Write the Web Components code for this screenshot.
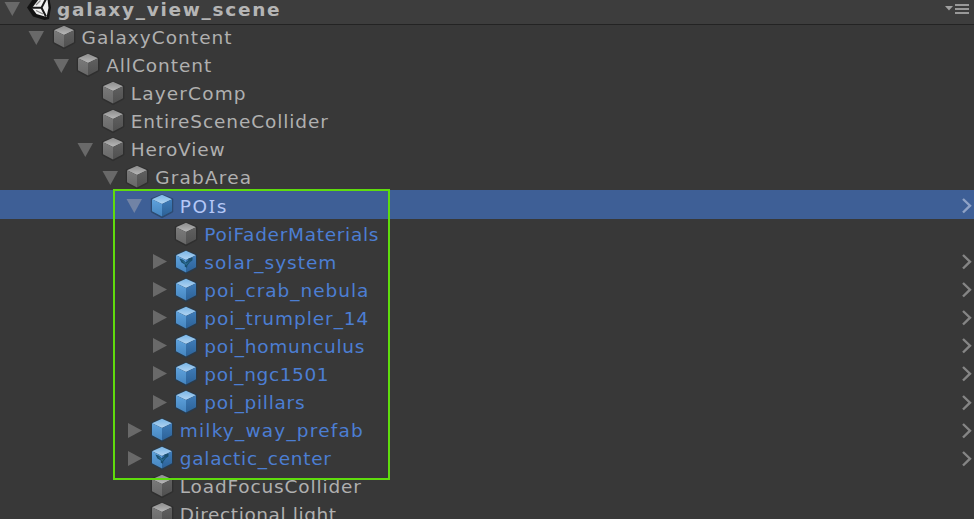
<!DOCTYPE html>
<html lang="en"><head><meta charset="utf-8"><title>Hierarchy</title>
<style>html,body{margin:0;height:100%;overflow:hidden;background:#383838}</style></head>
<body><hierarchy-panel></hierarchy-panel>
<script>
class TreeLabel extends HTMLElement {
  connectedCallback() {
    const root = this.attachShadow({mode: 'open'});
    root.innerHTML = `<style>
      :host{display:block;white-space:pre;line-height:28px}
      span{display:inline-block}
      i{font:18.5px "Noto Sans",sans-serif;line-height:0}
      </style><span></span>`;
    const span = root.querySelector('span');
    const text = this.getAttribute('text');
    span.innerHTML = text.replace('I', '<i>I</i>');
    const target = Number(this.getAttribute('fit'));
    const natural = span.getBoundingClientRect().width;
    span.style.letterSpacing = ((target + 1.6 - natural) / (text.length - .4)) + 'px';
  }
}
customElements.define('tree-label', TreeLabel);

class TreeArrow extends HTMLElement {
  connectedCallback() {
    const d = this.getAttribute('state') === 'open' ? 'M1.5 3H17L9.3 17Z' : 'M3 2V17L17 9.5Z';
    this.attachShadow({mode: 'open'}).innerHTML = `<style>:host{display:block;width:20px;height:20px}svg{display:block}</style>
      <svg width="20" height="20"><path d="${this.getAttribute('state') ? d : ''}" fill="var(--arrow,#696969)"/></svg>`;
  }
}
customElements.define('tree-arrow', TreeArrow);

class CubeIcon extends HTMLElement {
  connectedCallback() {
    const kind = this.getAttribute('kind');
    const blue = kind !== 'gray';
    const c = blue ? ['#79b5e6', '#b3d5f2', '#5fa2dc', '#4585c0', '#3f7cb8', '#2c6298', '#213c56']
                   : ['#8c8c8c', '#b9b9b9', '#7a7a7a', '#686868', '#606060', '#505050', '#292929'];
    const mark = kind === 'variant' ? `<path d="M5.4 9.4L9 10.8 11.8 13.4 14.2 11.4 14.4 9.6 18.6 8.6 18.4 11.6 15.8 13.2 13.4 16.4 13 18.8 10.8 17.8 10.8 15.6 7.4 13.4Z" fill="#1b4f6e"/><path d="M7 10.8L10 12.4 12.2 14.6 14.8 12.4 17 10.6 12.3 16.2Z" fill="#3486b5" opacity=".55"/>` : '';
    this.attachShadow({mode: 'open'}).innerHTML = `<style>:host{display:block;width:24px;height:26px}svg{display:block}</style>
      <svg width="24" height="26" viewBox="0 0 24 26"><defs>
      <linearGradient id="t" x2="0" y2="1"><stop stop-color="${c[0]}"/><stop offset="1" stop-color="${c[1]}"/></linearGradient>
      <linearGradient id="l" x2="0" y2="1"><stop stop-color="${c[2]}"/><stop offset="1" stop-color="${c[3]}"/></linearGradient>
      <linearGradient id="r" x2="0" y2="1"><stop stop-color="${c[4]}"/><stop offset="1" stop-color="${c[5]}"/></linearGradient></defs>
      <path d="M12 1.5L22.8 5.8V19L12 24.8 1.2 19V5.8Z" fill="${c[6]}" stroke="${c[6]}" stroke-width=".8" stroke-linejoin="round" opacity=".6"/>
      <path d="M12 1.8L22 6.2 12 11 2 6.2Z" fill="url(#t)"/>
      <path d="M2 6.2L12 11V23.4L2 18.2Z" fill="url(#l)"/>
      <path d="M22 6.2L12 11V23.4L22 18.2Z" fill="url(#r)"/>${mark}</svg>`;
  }
}
customElements.define('cube-icon', CubeIcon);

class TreeRow extends HTMLElement {
  connectedCallback() {
    const a = n => this.getAttribute(n) || '';
    this.attachShadow({mode: 'open'}).innerHTML = `<style>
      :host{display:flex;align-items:center;box-sizing:border-box;height:28.08px;flex:none;
        padding:3px 0 0 calc(27px + var(--depth) * 24.55px);
        font:18.5px "DejaVu Sans",sans-serif;color:#b0b0b0}
      :host([blue]){color:#4c7ed3}
      :host([selected]){background:#3e5f96;color:#b4c7f7;--arrow:#7183a5;--chev:#8fa2c6}
      cube-icon{margin:-1px 6px 0 4.6px}
      tree-label{flex:1;margin:-1px 0 -2px}
      .chev{margin-right:1px}
      </style>
      <tree-arrow state="${a('state')}"></tree-arrow><cube-icon kind="${a('kind')}"></cube-icon>
      <tree-label text="${a('text')}" fit="${a('fit')}"></tree-label>
      ${this.hasAttribute('chevron') ? '<svg class="chev" width="12" height="18"><path d="M2 2L9 8.7 2 15.5" fill="none" stroke="var(--chev,#858585)" stroke-width="2.4"/></svg>' : ''}`;
  }
}
customElements.define('tree-row', TreeRow);

class SceneHeader extends HTMLElement {
  connectedCallback() {
    this.attachShadow({mode: 'open'}).innerHTML = `<style>
      :host{display:flex;align-items:flex-start;box-sizing:border-box;height:25px;flex:none;background:#3d3d3d;border-bottom:1px solid #232323;
       font:bold 18.5px "DejaVu Sans",sans-serif;color:#b5b5b5;padding-left:2.5px;overflow:hidden}
      tree-arrow{margin-top:-1px}.logo{margin-left:4.5px}tree-label{margin:-4px 0 0 6px;flex:1}.menu{margin:2px 3px 0 0}
      </style><tree-arrow state="open"></tree-arrow>
      <svg class="logo" width="24" height="21" viewBox="0 0 24 21"><path d="M0 7.5L6 -1H22.5L24 7.5 22 19 17.5 20 6 16.5Z" fill="#131313"/>
       <path d="M5 8L12-1H20.5L21.5 8 19.5 17 9.5 14Z" fill="#f1f1f1"/>
       <path d="M4 7.7H14.5L19.5-2M14.5 7.7L19 16.5" fill="none" stroke="#191919" stroke-width="2"/>
       <path d="M9 5L13.5 0.5M9 10.5L16 14" fill="none" stroke="#8a8a8a" stroke-width="1.2"/></svg>
      <tree-label text="galaxy_view_scene" fit="222"></tree-label>
      <svg class="menu" width="26" height="14"><path d="M0 4H8L4 8.5Z" fill="#a0a0a0"/><path d="M10 3H24M10 7H24M10 11H24" stroke="#999" stroke-width="2"/></svg>`;
  }
}
customElements.define('scene-header', SceneHeader);

class HierarchyPanel extends HTMLElement {
  connectedCallback() {
    const rows = [
      [0,'open','gray','GalaxyContent',149], [1,'open','gray','AllContent',104], [2,'','gray','LayerComp',114],
      [2,'','gray','EntireSceneCollider',196], [2,'open','gray','HeroView',93], [3,'open','gray','GrabArea',95],
      [4,'open','blue','POIs',46,'blue selected chevron'], [5,'','gray','PoiFaderMaterials',173,'blue'],
      [5,'closed','variant','solar_system',131,'blue chevron'], [5,'closed','blue','poi_crab_nebula',163,'blue chevron'],
      [5,'closed','blue','poi_trumpler_14',163,'blue chevron'], [5,'closed','blue','poi_homunculus',159,'blue chevron'],
      [5,'closed','blue','poi_ngc1501',123,'blue chevron'], [5,'closed','blue','poi_pillars',99,'blue chevron'],
      [4,'closed','blue','milky_way_prefab',182,'blue chevron'], [4,'closed','variant','galactic_center',150,'blue chevron'],
      [4,'','gray','LoadFocusCollider',180], [4,'','gray','Directional light',155]
    ];
    this.attachShadow({mode: 'open'}).innerHTML = `<style>
      :host{display:flex;flex-direction:column;position:relative;width:974px;height:519px;overflow:hidden;background:#383838}
      .rows{display:flex;flex-direction:column;margin-top:-3px}
      .outline{position:absolute;left:113px;top:189px;width:277px;height:291px;box-sizing:border-box;border:2.5px solid #5fdc0d}
      </style><scene-header></scene-header><div class="rows">${rows.map(r =>
      `<tree-row style="--depth:${r[0]}" state="${r[1]}" kind="${r[2]}" text="${r[3]}" fit="${r[4]}" ${r[5] || ''}></tree-row>`).join('')}</div><div class="outline"></div>`;
  }
}
customElements.define('hierarchy-panel', HierarchyPanel);
</script></body></html>
